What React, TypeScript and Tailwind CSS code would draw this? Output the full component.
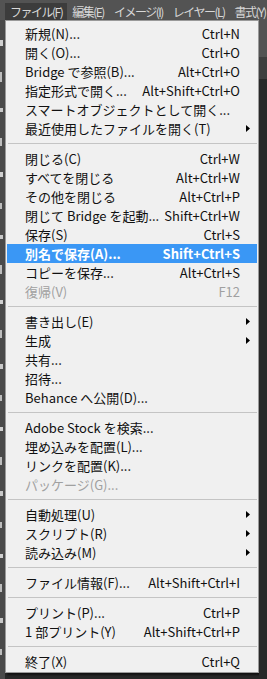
type Item =
  | { sep: true }
  | { sep?: false; label: string; shortcut?: string; sub?: boolean; disabled?: boolean; active?: boolean }

const items: Item[] = [
  { label: '新規(N)...', shortcut: 'Ctrl+N' },
  { label: '開く(O)...', shortcut: 'Ctrl+O' },
  { label: 'Bridge で参照(B)...', shortcut: 'Alt+Ctrl+O' },
  { label: '指定形式で開く...', shortcut: 'Alt+Shift+Ctrl+O' },
  { label: 'スマートオブジェクトとして開く...' },
  { label: '最近使用したファイルを開く(T)', sub: true },
  { sep: true },
  { label: '閉じる(C)', shortcut: 'Ctrl+W' },
  { label: 'すべてを閉じる', shortcut: 'Alt+Ctrl+W' },
  { label: 'その他を閉じる', shortcut: 'Alt+Ctrl+P' },
  { label: '閉じて Bridge を起動...', shortcut: 'Shift+Ctrl+W' },
  { label: '保存(S)', shortcut: 'Ctrl+S' },
  { label: '別名で保存(A)...', shortcut: 'Shift+Ctrl+S', active: true },
  { label: 'コピーを保存...', shortcut: 'Alt+Ctrl+S' },
  { label: '復帰(V)', shortcut: 'F12', disabled: true },
  { sep: true },
  { label: '書き出し(E)', sub: true },
  { label: '生成', sub: true },
  { label: '共有...' },
  { label: '招待...' },
  { label: 'Behance へ公開(D)...' },
  { sep: true },
  { label: 'Adobe Stock を検索...' },
  { label: '埋め込みを配置(L)...' },
  { label: 'リンクを配置(K)...' },
  { label: 'パッケージ(G)...', disabled: true },
  { sep: true },
  { label: '自動処理(U)', sub: true },
  { label: 'スクリプト(R)', sub: true },
  { label: '読み込み(M)', sub: true },
  { sep: true },
  { label: 'ファイル情報(F)...', shortcut: 'Alt+Shift+Ctrl+I' },
  { sep: true },
  { label: 'プリント(P)...', shortcut: 'Ctrl+P' },
  { label: '1 部プリント(Y)', shortcut: 'Alt+Shift+Ctrl+P' },
  { sep: true },
  { label: '終了(X)', shortcut: 'Ctrl+Q' },
]

function Arrow({ light }: { light?: boolean }) {
  return (
    <svg width="4" height="7" viewBox="0 0 4 7">
      <path d="M0 0 L4 3.5 L0 7 Z" fill={light ? '#ffffff' : '#000000'} />
    </svg>
  )
}

export default function App() {
  const topMenus = ['ファイル(F)', '編集(E)', 'イメージ(I)', 'レイヤー(L)', '書式(Y)']

  return (
    <div className="w-[267px] h-[679px] bg-[#282828] overflow-hidden flex flex-col font-['Noto_Sans_CJK_JP','Noto_Sans',sans-serif]">
      {/* Menu bar */}
      <div className="h-[20px] bg-[#535353] flex items-end pl-[5px] text-[12px] tracking-[-1.5px] text-[#d8d8d8] whitespace-nowrap shrink-0">
        {topMenus.map((m, i) => (
          <div
            key={m}
            className={`h-[17px] flex items-center px-[5px] leading-none ${i === 0 ? 'bg-[#3c3c3c]' : ''}`}
          >
            {m}
          </div>
        ))}
      </div>

      <div className="flex flex-1">
        {/* Tools strip */}
        <div className="w-[5px] bg-[#4a4a4a] flex flex-col items-start pt-[20px] gap-[26px]">
          <div className="w-[3px] h-[6px] bg-[#d0d0d0]" />
          <div className="w-[2px] h-[10px] bg-[#bdbdbd]" />
          <div className="w-[3px] h-[4px] bg-[#c8c8c8]" />
          <div className="w-[2px] h-[8px] bg-[#bdbdbd]" />
          <div className="w-[3px] h-[5px] bg-[#d0d0d0]" />
          <div className="w-[2px] h-[6px] bg-[#bdbdbd]" />
          <div className="w-[3px] h-[4px] bg-[#c8c8c8]" />
          <div className="w-[2px] h-[9px] bg-[#bdbdbd]" />
          <div className="w-[3px] h-[4px] bg-[#d0d0d0]" />
          <div className="w-[2px] h-[8px] bg-[#bdbdbd]" />
          <div className="w-[3px] h-[5px] bg-[#c8c8c8]" />
          <div className="w-[2px] h-[6px] bg-[#bdbdbd]" />
          <div className="w-[3px] h-[4px] bg-[#d0d0d0]" />
          <div className="w-[2px] h-[8px] bg-[#bdbdbd]" />
          <div className="w-[3px] h-[5px] bg-[#c8c8c8]" />
          <div className="w-[2px] h-[6px] bg-[#bdbdbd]" />
          <div className="w-[3px] h-[4px] bg-[#d0d0d0]" />
          <div className="w-[2px] h-[8px] bg-[#bdbdbd]" />
          <div className="w-[3px] h-[5px] bg-[#c8c8c8]" />
          <div className="w-[2px] h-[6px] bg-[#bdbdbd]" />
        </div>

        {/* File menu */}
        <div className="w-[254px] self-start bg-[#f0f0f0] border border-[#9a9a9a] pt-[3px] pb-[1px] px-px text-[13px] text-[#111111] whitespace-nowrap shadow-[2px_2px_2px_rgba(0,0,0,0.6)]">
          {items.map((it, i) =>
            it.sep ? (
              <div key={i} className="h-[11px] flex items-center pl-px">
                <div className="h-px w-full bg-[#c4c4c4]" />
              </div>
            ) : (
              <div
                key={i}
                className={`h-[19px] flex items-center pl-[18px] pr-[7px] leading-none ${
                  it.active ? 'bg-[#3a97f5] text-white font-semibold' : ''
                } ${it.disabled ? 'text-[#a0a0a0]' : ''}`}
              >
                <span className="flex-1">{it.label}</span>
                {it.shortcut && <span>{it.shortcut}</span>}
                <span className="w-[10px] flex justify-end">{it.sub && <Arrow light={it.active} />}</span>
              </div>
            ),
          )}
        </div>

        {/* Right side panels */}
        <div className="flex-1 flex flex-col">
          <div className="h-[37px] bg-[#535353]" />
          <div className="h-[22px] bg-[#3e3e3e]" />
          <div className="flex-1 bg-[#282828]" />
        </div>
      </div>
    </div>
  )
}
